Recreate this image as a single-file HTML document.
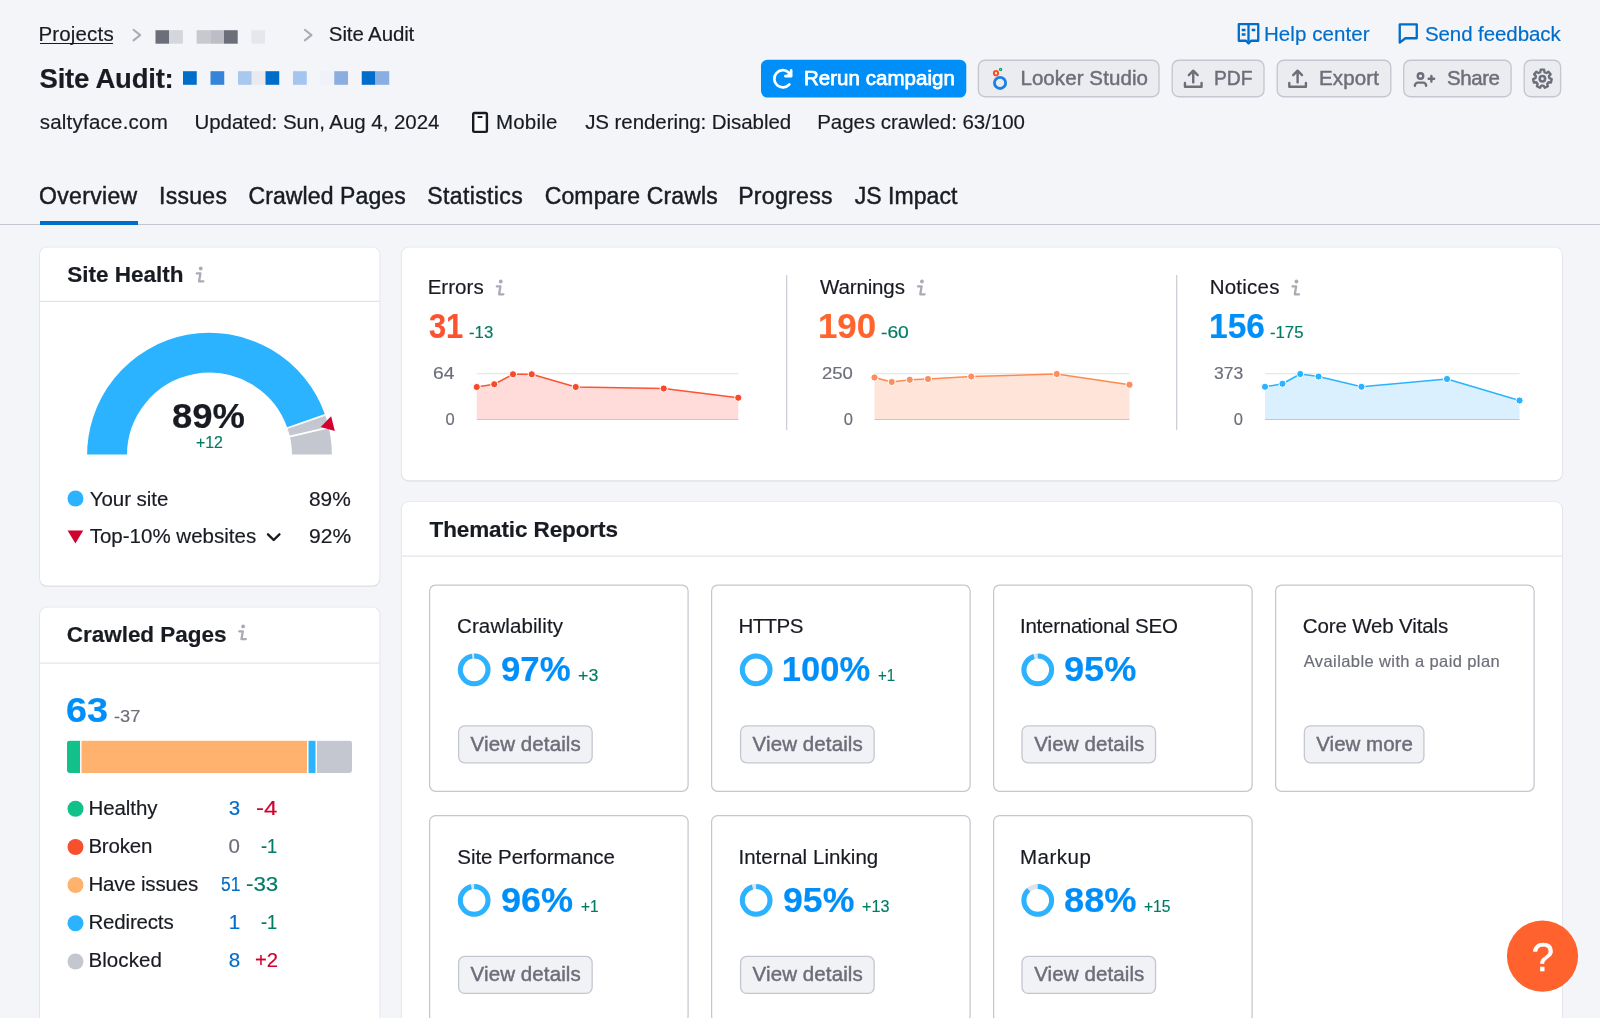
<!DOCTYPE html>
<html lang="en"><head><meta charset="utf-8"><title>Site Audit</title>
<style>
html,body{margin:0;padding:0}
body{width:1600px;height:1018px;overflow:hidden;position:relative;background:#f4f5f9;font-family:"Liberation Sans",sans-serif;color:#191b23}
.t{position:absolute;white-space:nowrap;line-height:1;transform-origin:0 50%;-webkit-text-stroke:0.18px currentColor}
.a{position:absolute}
.card{position:absolute;background:#fff;border-radius:7px;box-shadow:0 0 0 1px rgba(25,27,35,.045),0 1px 2px rgba(25,27,35,.11)}
.btn{position:absolute;box-sizing:border-box;border:1px solid #c4c7cf;border-radius:7px;background:#ebecf0}
.sub{position:absolute;box-sizing:border-box;border:1px solid #c4c7cf;border-radius:7px;background:#fff}
svg{position:absolute;left:0;top:0}
.tx{position:absolute;left:0;top:0;width:1600px;height:1018px;will-change:transform}
</style></head>
<body>
<div class="a" style="left:0px;top:224px;width:1600px;height:1px;background:#c4c7cf"></div>
<div class="a" style="left:40px;top:221px;width:98px;height:4px;background:#006dca"></div>
<div class="a" style="left:40px;top:43px;width:73px;height:1px;background:#191b23"></div>
<svg width="1600" height="1018" viewBox="0 0 1600 1018">
<rect x="39.00" y="246.40" width="341.50" height="340.10" rx="8" fill="rgba(25,27,35,.045)"/>
<rect x="39.50" y="247.40" width="340.50" height="339.70" rx="7.5" fill="rgba(25,27,35,.06)"/>
<rect x="40.00" y="247.40" width="339.50" height="338.10" rx="7" fill="#fff"/>
<rect x="39.00" y="606.60" width="341.50" height="454.40" rx="8" fill="rgba(25,27,35,.045)"/>
<rect x="39.50" y="607.60" width="340.50" height="454.00" rx="7.5" fill="rgba(25,27,35,.06)"/>
<rect x="40.00" y="607.60" width="339.50" height="452.40" rx="7" fill="#fff"/>
<rect x="400.75" y="246.40" width="1162.25" height="234.80" rx="8" fill="rgba(25,27,35,.045)"/>
<rect x="401.25" y="247.40" width="1161.25" height="234.40" rx="7.5" fill="rgba(25,27,35,.06)"/>
<rect x="401.75" y="247.40" width="1160.25" height="232.80" rx="7" fill="#fff"/>
<rect x="400.75" y="501.00" width="1162.25" height="560.00" rx="8" fill="rgba(25,27,35,.045)"/>
<rect x="401.25" y="502.00" width="1161.25" height="559.60" rx="7.5" fill="rgba(25,27,35,.06)"/>
<rect x="401.75" y="502.00" width="1160.25" height="558.00" rx="7" fill="#fff"/>
<rect x="40" y="300.75" width="339.5" height="1.1" fill="#e0e1e9"/>
<rect x="40" y="662.5500000000001" width="339.5" height="1.1" fill="#e0e1e9"/>
<rect x="401.75" y="555.5500000000001" width="1160.25" height="1.1" fill="#e0e1e9"/>
<rect x="786.1500000000001" y="275" width="1.1" height="155" fill="#c4c7cf"/>
<rect x="1176.15" y="275" width="1.1" height="155" fill="#c4c7cf"/>
<rect x="761.00" y="59.70" width="205.30" height="37.90" rx="6.5" fill="#008ff8"/>
<rect x="978.40" y="60.25" width="180.60" height="36.50" rx="6.5" fill="#ebecf0" stroke="#c4c7cf" stroke-width="1.35"/>
<rect x="1172.20" y="60.25" width="91.80" height="36.50" rx="6.5" fill="#ebecf0" stroke="#c4c7cf" stroke-width="1.35"/>
<rect x="1277.20" y="60.25" width="113.60" height="36.50" rx="6.5" fill="#ebecf0" stroke="#c4c7cf" stroke-width="1.35"/>
<rect x="1403.70" y="60.25" width="107.40" height="36.50" rx="6.5" fill="#ebecf0" stroke="#c4c7cf" stroke-width="1.35"/>
<rect x="1524.20" y="60.25" width="36.40" height="36.50" rx="6.5" fill="#ebecf0" stroke="#c4c7cf" stroke-width="1.35"/>
<rect x="429.60" y="585.00" width="258.50" height="206.30" rx="6" fill="#fff" stroke="#c4c7cf" stroke-width="1.25"/>
<rect x="711.60" y="585.00" width="258.50" height="206.30" rx="6" fill="#fff" stroke="#c4c7cf" stroke-width="1.25"/>
<rect x="993.60" y="585.00" width="258.50" height="206.30" rx="6" fill="#fff" stroke="#c4c7cf" stroke-width="1.25"/>
<rect x="1275.60" y="585.00" width="258.50" height="206.30" rx="6" fill="#fff" stroke="#c4c7cf" stroke-width="1.25"/>
<rect x="429.60" y="815.60" width="258.50" height="206.30" rx="6" fill="#fff" stroke="#c4c7cf" stroke-width="1.25"/>
<rect x="711.60" y="815.60" width="258.50" height="206.30" rx="6" fill="#fff" stroke="#c4c7cf" stroke-width="1.25"/>
<rect x="993.60" y="815.60" width="258.50" height="206.30" rx="6" fill="#fff" stroke="#c4c7cf" stroke-width="1.25"/>
<rect x="458.60" y="725.90" width="133.55" height="36.90" rx="6" fill="#f1f2f5" stroke="#c4c7cf" stroke-width="1.3"/>
<rect x="740.60" y="725.90" width="133.55" height="36.90" rx="6" fill="#f1f2f5" stroke="#c4c7cf" stroke-width="1.3"/>
<rect x="1022.00" y="725.90" width="133.55" height="36.90" rx="6" fill="#f1f2f5" stroke="#c4c7cf" stroke-width="1.3"/>
<rect x="1304.35" y="725.90" width="119.55" height="36.90" rx="6" fill="#f1f2f5" stroke="#c4c7cf" stroke-width="1.3"/>
<rect x="458.60" y="956.45" width="133.55" height="36.90" rx="6" fill="#f1f2f5" stroke="#c4c7cf" stroke-width="1.3"/>
<rect x="740.60" y="956.45" width="133.55" height="36.90" rx="6" fill="#f1f2f5" stroke="#c4c7cf" stroke-width="1.3"/>
<rect x="1022.00" y="956.45" width="133.55" height="36.90" rx="6" fill="#f1f2f5" stroke="#c4c7cf" stroke-width="1.3"/>
<clipPath id="gclip"><rect x="60" y="320" width="300" height="134.6"/></clipPath><g clip-path="url(#gclip)">
<path d="M107.10,458.42 A102.45,102.45 0 0 1 306.22,421.41" fill="none" stroke="#2bb3ff" stroke-width="39.9"/>
<path d="M306.22,421.41 A102.45,102.45 0 0 1 311.90,458.42" fill="none" stroke="#c4c7cf" stroke-width="39.9"/>
<line x1="285.97" y1="428.48" x2="326.56" y2="414.30" stroke="#fff" stroke-width="1.8"/>
<line x1="288.38" y1="436.79" x2="330.25" y2="427.01" stroke="#fff" stroke-width="1.8"/>
</g>
<polygon points="320.7,426.9 331.1,416.3 334.8,430.9" fill="#d1002f"/>
<rect x="476.75" y="373.25" width="261.5" height="1" fill="#e0e1e9"/>
<polygon points="476.75,419.5 476.75,387 494.25,384.25 513,374.25 531.75,374.25 575.75,387 663.75,388.5 738.25,397.75 738.25,419.5" fill="#ffdcd9"/>
<rect x="476.75" y="419.0" width="261.5" height="1" fill="#c4c7cf"/>
<polyline points="476.75,387 494.25,384.25 513,374.25 531.75,374.25 575.75,387 663.75,388.5 738.25,397.75" fill="none" stroke="#fb5436" stroke-width="1.5" stroke-linejoin="round"/>
<circle cx="476.75" cy="387" r="3.6" fill="#f74a2c" stroke="#fff" stroke-width="1"/>
<circle cx="494.25" cy="384.25" r="3.6" fill="#f74a2c" stroke="#fff" stroke-width="1"/>
<circle cx="513" cy="374.25" r="3.6" fill="#f74a2c" stroke="#fff" stroke-width="1"/>
<circle cx="531.75" cy="374.25" r="3.6" fill="#f74a2c" stroke="#fff" stroke-width="1"/>
<circle cx="575.75" cy="387" r="3.6" fill="#f74a2c" stroke="#fff" stroke-width="1"/>
<circle cx="663.75" cy="388.5" r="3.6" fill="#f74a2c" stroke="#fff" stroke-width="1"/>
<circle cx="738.25" cy="397.75" r="3.6" fill="#f74a2c" stroke="#fff" stroke-width="1"/>
<rect x="874.5" y="373.25" width="255.0" height="1" fill="#e0e1e9"/>
<polygon points="874.5,419.5 874.5,377.5 891.75,382 909.75,379.75 928,379 971.25,376.5 1056.75,374 1129.5,384.75 1129.5,419.5" fill="#ffe5d9"/>
<rect x="874.5" y="419.0" width="255.0" height="1" fill="#c4c7cf"/>
<polyline points="874.5,377.5 891.75,382 909.75,379.75 928,379 971.25,376.5 1056.75,374 1129.5,384.75" fill="none" stroke="#ff8a4f" stroke-width="1.5" stroke-linejoin="round"/>
<circle cx="874.5" cy="377.5" r="3.6" fill="#fb8d5e" stroke="#fff" stroke-width="1"/>
<circle cx="891.75" cy="382" r="3.6" fill="#fb8d5e" stroke="#fff" stroke-width="1"/>
<circle cx="909.75" cy="379.75" r="3.6" fill="#fb8d5e" stroke="#fff" stroke-width="1"/>
<circle cx="928" cy="379" r="3.6" fill="#fb8d5e" stroke="#fff" stroke-width="1"/>
<circle cx="971.25" cy="376.5" r="3.6" fill="#fb8d5e" stroke="#fff" stroke-width="1"/>
<circle cx="1056.75" cy="374" r="3.6" fill="#fb8d5e" stroke="#fff" stroke-width="1"/>
<circle cx="1129.5" cy="384.75" r="3.6" fill="#fb8d5e" stroke="#fff" stroke-width="1"/>
<rect x="1265" y="373.25" width="254.5" height="1" fill="#e0e1e9"/>
<polygon points="1265,419.5 1265,386.75 1282.5,383.75 1300.25,374 1318.5,376.5 1361.5,386.75 1447,379 1519.5,400.5 1519.5,419.5" fill="#dbf0fe"/>
<rect x="1265" y="419.0" width="254.5" height="1" fill="#c4c7cf"/>
<polyline points="1265,386.75 1282.5,383.75 1300.25,374 1318.5,376.5 1361.5,386.75 1447,379 1519.5,400.5" fill="none" stroke="#2bb3ff" stroke-width="1.5" stroke-linejoin="round"/>
<circle cx="1265" cy="386.75" r="3.6" fill="#2bb3ff" stroke="#fff" stroke-width="1"/>
<circle cx="1282.5" cy="383.75" r="3.6" fill="#2bb3ff" stroke="#fff" stroke-width="1"/>
<circle cx="1300.25" cy="374" r="3.6" fill="#2bb3ff" stroke="#fff" stroke-width="1"/>
<circle cx="1318.5" cy="376.5" r="3.6" fill="#2bb3ff" stroke="#fff" stroke-width="1"/>
<circle cx="1361.5" cy="386.75" r="3.6" fill="#2bb3ff" stroke="#fff" stroke-width="1"/>
<circle cx="1447" cy="379" r="3.6" fill="#2bb3ff" stroke="#fff" stroke-width="1"/>
<circle cx="1519.5" cy="400.5" r="3.6" fill="#2bb3ff" stroke="#fff" stroke-width="1"/>
<circle cx="474.15" cy="669.85" r="13.85" fill="none" stroke="#e0e1e9" stroke-width="5"/>
<circle cx="474.15" cy="669.85" r="13.85" fill="none" stroke="#2bb3ff" stroke-width="5" stroke-dasharray="84.41 87.02" transform="rotate(-90 474.15 669.85)"/>
<circle cx="756.15" cy="669.85" r="13.85" fill="none" stroke="#e0e1e9" stroke-width="5"/>
<circle cx="756.15" cy="669.85" r="13.85" fill="none" stroke="#2bb3ff" stroke-width="5"/>
<circle cx="1037.75" cy="669.85" r="13.85" fill="none" stroke="#e0e1e9" stroke-width="5"/>
<circle cx="1037.75" cy="669.85" r="13.85" fill="none" stroke="#2bb3ff" stroke-width="5" stroke-dasharray="82.67 87.02" transform="rotate(-90 1037.75 669.85)"/>
<circle cx="474.15" cy="900.35" r="13.85" fill="none" stroke="#e0e1e9" stroke-width="5"/>
<circle cx="474.15" cy="900.35" r="13.85" fill="none" stroke="#2bb3ff" stroke-width="5" stroke-dasharray="83.54 87.02" transform="rotate(-90 474.15 900.35)"/>
<circle cx="756.15" cy="900.35" r="13.85" fill="none" stroke="#e0e1e9" stroke-width="5"/>
<circle cx="756.15" cy="900.35" r="13.85" fill="none" stroke="#2bb3ff" stroke-width="5" stroke-dasharray="82.67 87.02" transform="rotate(-90 756.15 900.35)"/>
<circle cx="1037.75" cy="900.35" r="13.85" fill="none" stroke="#e0e1e9" stroke-width="5"/>
<circle cx="1037.75" cy="900.35" r="13.85" fill="none" stroke="#2bb3ff" stroke-width="5" stroke-dasharray="76.58 87.02" transform="rotate(-90 1037.75 900.35)"/>
<clipPath id="barclip"><rect x="67" y="740.6" width="285" height="32.4" rx="3"/></clipPath><g clip-path="url(#barclip)">
<rect x="67" y="740.6" width="13" height="32.4" fill="#12c18a"/>
<rect x="81.5" y="740.6" width="225.5" height="32.4" fill="#ffb26e"/>
<rect x="308.5" y="740.6" width="7.0" height="32.4" fill="#2bb3ff"/>
<rect x="317" y="740.6" width="35" height="32.4" fill="#c4c7cf"/>
</g>
<circle cx="75.5" cy="808.75" r="8" fill="#12c18a"/>
<circle cx="75.5" cy="847" r="8" fill="#f7502e"/>
<circle cx="75.5" cy="885" r="8" fill="#ffb26e"/>
<circle cx="75.5" cy="923.25" r="8" fill="#2bb3ff"/>
<circle cx="75.5" cy="961.5" r="8" fill="#c4c7cf"/>
<polyline points="133.5,29.8 140.2,35.1 133.5,40.4" fill="none" stroke="#a9abb6" stroke-width="2" stroke-linecap="round" stroke-linejoin="round"/>
<polyline points="304.8,29.8 311.5,35.1 304.8,40.4" fill="none" stroke="#a9abb6" stroke-width="2" stroke-linecap="round" stroke-linejoin="round"/>
<rect x="155.50" y="30.2" width="13.7" height="13.5" fill="#6c6e79"/>
<rect x="169.20" y="30.2" width="13.7" height="13.5" fill="#d5d6dc"/>
<rect x="196.60" y="30.2" width="13.7" height="13.5" fill="#c8c9cf"/>
<rect x="210.30" y="30.2" width="13.7" height="13.5" fill="#bcbdc5"/>
<rect x="224.00" y="30.2" width="13.7" height="13.5" fill="#6c6e79"/>
<rect x="251.40" y="30.2" width="13.7" height="13.5" fill="#e6e7ec"/>
<rect x="183.00" y="71.2" width="13.75" height="13.6" fill="#006dca"/>
<rect x="210.50" y="71.2" width="13.75" height="13.6" fill="#3584d9"/>
<rect x="238.00" y="71.2" width="13.75" height="13.6" fill="#a9c8ee"/>
<rect x="251.75" y="71.2" width="13.75" height="13.6" fill="#e8eaf0"/>
<rect x="265.50" y="71.2" width="13.75" height="13.6" fill="#006dca"/>
<rect x="293.00" y="71.2" width="13.75" height="13.6" fill="#a3c5f0"/>
<rect x="320.50" y="71.2" width="13.75" height="13.6" fill="#eff2f8"/>
<rect x="334.25" y="71.2" width="13.75" height="13.6" fill="#8aaee0"/>
<rect x="361.75" y="71.2" width="13.75" height="13.6" fill="#006dca"/>
<rect x="375.50" y="71.2" width="13.75" height="13.6" fill="#8aaee0"/>
<rect x="473.2" y="113.05" width="13.7" height="18.8" rx="1.3" fill="#fff" stroke="#191b23" stroke-width="2.4"/>
<rect x="477.4" y="116" width="5.2" height="2" rx="1" fill="#191b23"/>
<g stroke="#006dca" stroke-width="2.3" fill="none" stroke-linejoin="round"><path d="M1238.8,24.15 h19.45 v16.6 h-7.2 l-2.5,2.6 l-2.5,-2.6 h-7.25 z"/><path d="M1248.5,24.15 v17.5"/><path d="M1241.7,30 h3.8 M1241.7,34.5 h3.8 M1251.7,30 h3.6" stroke-width="2.5"/></g>
<path d="M1399.75,24.45 h17 v13.8 h-11.4 l-5.6,4.3 z" fill="none" stroke="#006dca" stroke-width="2.3" stroke-linejoin="round"/>
<g stroke="#fff" stroke-width="2.7" fill="none" stroke-linecap="round" stroke-linejoin="round"><path d="M789.39,84.44 A8.6,8.6 0 1 1 788.65,72.41"/><path d="M791.15,70.4 V76.15 H785.4"/></g><polygon points="791.15,70.4 791.15,76.15 785.4,76.15" fill="#fff"/>
<circle cx="1000.05" cy="82.9" r="5.6" fill="none" stroke="#1a80e5" stroke-width="2.8"/><circle cx="996" cy="73.2" r="2.15" fill="none" stroke="#ff4a22" stroke-width="1.9"/><circle cx="1000.6" cy="69.5" r="1.1" fill="none" stroke="#0da960" stroke-width="1.3"/>
<g stroke="#6c6e79" stroke-width="2.4" fill="none" stroke-linecap="round" stroke-linejoin="round"><path d="M1193.25,82.4 V71 M1188.85,75.1 L1193.25,70.7 L1197.65,75.1"/><path d="M1184.95,82.9 V86.7 H1201.55 V82.9"/></g>
<g stroke="#6c6e79" stroke-width="2.4" fill="none" stroke-linecap="round" stroke-linejoin="round"><path d="M1297.6,82.4 V71 M1293.1999999999998,75.1 L1297.6,70.7 L1302.0,75.1"/><path d="M1289.3,82.9 V86.7 H1305.8999999999999 V82.9"/></g>
<g stroke="#6c6e79" stroke-width="2.4" fill="none" stroke-linecap="round" stroke-linejoin="round"><circle cx="1420.5" cy="75.95" r="2.75"/><path d="M1414.9,85.8 v-0.2 a3,3 0 0 1 3,-3 h5.2 a3,3 0 0 1 3,3 v0.2"/><path d="M1431.4,75.95 v5.5 M1428.65,78.7 h5.5"/></g>
<g stroke="#6c6e79" stroke-width="2.4" fill="none" stroke-linejoin="round"><path d="M1540.35,72.06 L1540.71,69.61 L1544.09,69.61 L1544.45,72.06 L1546.36,72.98 L1548.49,71.72 L1550.61,74.37 L1548.91,76.18 L1549.38,78.24 L1551.69,79.13 L1550.94,82.44 L1548.47,82.23 L1547.15,83.89 L1547.89,86.25 L1544.84,87.72 L1543.46,85.67 L1541.34,85.67 L1539.96,87.72 L1536.91,86.25 L1537.65,83.89 L1536.33,82.23 L1533.86,82.44 L1533.11,79.13 L1535.42,78.24 L1535.89,76.18 L1534.19,74.37 L1536.31,71.72 L1538.44,72.98 Z"/><circle cx="1542.4" cy="78.75" r="2.7" stroke-width="2.6"/></g>
<circle cx="1542.5" cy="956.1" r="35.6" fill="#ff622d"/>
<g transform="translate(196,266.5)" stroke="#a9abb6" fill="none" stroke-width="2.3" stroke-linecap="round" stroke-linejoin="round"><circle cx="4.75" cy="2" r="1.9" fill="#a9abb6" stroke="none"/><path d="M0.8,6.9 L4.4,6.9 L3.1,14.8 L7.4,14.8"/></g>
<g transform="translate(238.4,624.4)" stroke="#a9abb6" fill="none" stroke-width="2.3" stroke-linecap="round" stroke-linejoin="round"><circle cx="4.75" cy="2" r="1.9" fill="#a9abb6" stroke="none"/><path d="M0.8,6.9 L4.4,6.9 L3.1,14.8 L7.4,14.8"/></g>
<g transform="translate(496,279.5)" stroke="#a9abb6" fill="none" stroke-width="2.3" stroke-linecap="round" stroke-linejoin="round"><circle cx="4.75" cy="2" r="1.9" fill="#a9abb6" stroke="none"/><path d="M0.8,6.9 L4.4,6.9 L3.1,14.8 L7.4,14.8"/></g>
<g transform="translate(917.2,279.5)" stroke="#a9abb6" fill="none" stroke-width="2.3" stroke-linecap="round" stroke-linejoin="round"><circle cx="4.75" cy="2" r="1.9" fill="#a9abb6" stroke="none"/><path d="M0.8,6.9 L4.4,6.9 L3.1,14.8 L7.4,14.8"/></g>
<g transform="translate(1291.7,279.5)" stroke="#a9abb6" fill="none" stroke-width="2.3" stroke-linecap="round" stroke-linejoin="round"><circle cx="4.75" cy="2" r="1.9" fill="#a9abb6" stroke="none"/><path d="M0.8,6.9 L4.4,6.9 L3.1,14.8 L7.4,14.8"/></g>
<circle cx="75.5" cy="498.5" r="8" fill="#2bb3ff"/>
<polygon points="67.6,530.6 83.2,530.6 75.4,543.4" fill="#d1002f"/>
<polyline points="268,534.3 273.7,540 279.4,534.3" fill="none" stroke="#191b23" stroke-width="2.4" stroke-linecap="round" stroke-linejoin="round"/>
</svg>
<div class="tx">
<span class="t" style="left:38.40px;top:24.25px;font-size:20.5px;color:#191b23;letter-spacing:0.170px;">Projects</span>
<span class="t" style="left:328.86px;top:24.25px;font-size:20.5px;color:#191b23;letter-spacing:-0.131px;">Site Audit</span>
<span class="t" style="left:39.57px;top:64.50px;font-size:27.5px;color:#191b23;font-weight:700;letter-spacing:-0.227px;">Site Audit:</span>
<span class="t" style="left:39.68px;top:111.75px;font-size:20.5px;color:#191b23;letter-spacing:0.234px;">saltyface.com</span>
<span class="t" style="left:194.47px;top:111.75px;font-size:20.5px;color:#191b23;letter-spacing:-0.054px;">Updated: Sun, Aug 4, 2024</span>
<span class="t" style="left:495.90px;top:111.75px;font-size:20.5px;color:#191b23;letter-spacing:0.229px;">Mobile</span>
<span class="t" style="left:585.18px;top:111.75px;font-size:20.5px;color:#191b23;letter-spacing:-0.068px;">JS rendering: Disabled</span>
<span class="t" style="left:817.15px;top:111.75px;font-size:20.5px;color:#191b23;letter-spacing:-0.035px;">Pages crawled: 63/100</span>
<span class="t" style="left:38.92px;top:184.75px;font-size:23px;color:#191b23;letter-spacing:0.349px;-webkit-text-stroke:0.45px currentColor;">Overview</span>
<span class="t" style="left:158.95px;top:184.75px;font-size:23px;color:#191b23;letter-spacing:0.308px;-webkit-text-stroke:0.45px currentColor;">Issues</span>
<span class="t" style="left:248.42px;top:184.75px;font-size:23px;color:#191b23;letter-spacing:0.111px;-webkit-text-stroke:0.45px currentColor;">Crawled Pages</span>
<span class="t" style="left:427.28px;top:184.75px;font-size:23px;color:#191b23;letter-spacing:0.379px;-webkit-text-stroke:0.45px currentColor;">Statistics</span>
<span class="t" style="left:544.67px;top:184.75px;font-size:23px;color:#191b23;letter-spacing:0.137px;-webkit-text-stroke:0.45px currentColor;">Compare Crawls</span>
<span class="t" style="left:738.20px;top:184.75px;font-size:23px;color:#191b23;letter-spacing:0.319px;-webkit-text-stroke:0.45px currentColor;">Progress</span>
<span class="t" style="left:854.64px;top:184.75px;font-size:23px;color:#191b23;letter-spacing:0.066px;-webkit-text-stroke:0.45px currentColor;">JS Impact</span>
<span class="t" style="left:1264.00px;top:24.25px;font-size:20.5px;color:#006dca;letter-spacing:0.067px;">Help center</span>
<span class="t" style="left:1424.96px;top:24.25px;font-size:20.5px;color:#006dca;letter-spacing:-0.088px;">Send feedback</span>
<span class="t" style="left:803.90px;top:68.00px;font-size:20.5px;color:#fff;letter-spacing:0.045px;-webkit-text-stroke:0.75px #fff;">Rerun campaign</span>
<span class="t" style="left:1020.40px;top:68.00px;font-size:20.5px;color:#6c6e79;letter-spacing:0.086px;-webkit-text-stroke:0.45px currentColor;">Looker Studio</span>
<span class="t" style="left:1214.09px;top:68.00px;font-size:20.5px;color:#6c6e79;transform:scaleX(0.9399);-webkit-text-stroke:0.45px currentColor;">PDF</span>
<span class="t" style="left:1318.90px;top:68.00px;font-size:20.5px;color:#6c6e79;letter-spacing:0.157px;-webkit-text-stroke:0.45px currentColor;">Export</span>
<span class="t" style="left:1446.96px;top:68.00px;font-size:20.5px;color:#6c6e79;letter-spacing:-0.408px;-webkit-text-stroke:0.45px currentColor;">Share</span>
<span class="t" style="left:67.15px;top:264.00px;font-size:22.5px;color:#191b23;font-weight:700;letter-spacing:0.016px;">Site Health</span>
<span class="t" style="left:171.86px;top:399.00px;font-size:34.5px;color:#191b23;font-weight:700;transform:scaleX(1.0558);">89%</span>
<span class="t" style="left:196.26px;top:434.25px;font-size:16.5px;color:#007c65;transform:scaleX(0.9606);">+12</span>
<span class="t" style="left:89.68px;top:488.50px;font-size:20.5px;color:#191b23;letter-spacing:-0.046px;">Your site</span>
<span class="t" style="left:309.35px;top:488.50px;font-size:20.5px;color:#191b23;transform:scaleX(1.0181);">89%</span>
<span class="t" style="left:89.68px;top:526.00px;font-size:20.5px;color:#191b23;letter-spacing:0.007px;">Top-10% websites</span>
<span class="t" style="left:309.01px;top:526.00px;font-size:20.5px;color:#191b23;transform:scaleX(1.0264);">92%</span>
<span class="t" style="left:66.80px;top:624.00px;font-size:22.5px;color:#191b23;font-weight:700;letter-spacing:-0.038px;">Crawled Pages</span>
<span class="t" style="left:66.32px;top:693.00px;font-size:34.5px;color:#008ff8;font-weight:700;transform:scaleX(1.0978);">63</span>
<span class="t" style="left:114.43px;top:708.00px;font-size:16.5px;color:#6c6e79;transform:scaleX(1.1031);">-37</span>
<span class="t" style="left:88.40px;top:798.00px;font-size:20.5px;color:#191b23;letter-spacing:-0.068px;">Healthy</span>
<span class="t" style="left:228.83px;top:798.00px;font-size:20.5px;color:#006dca;">3</span>
<span class="t" style="left:256.25px;top:798.00px;font-size:20.5px;color:#d1002f;transform:scaleX(1.1653);">-4</span>
<span class="t" style="left:88.40px;top:836.00px;font-size:20.5px;color:#191b23;letter-spacing:-0.190px;">Broken</span>
<span class="t" style="left:228.51px;top:836.00px;font-size:20.5px;color:#6c6e79;">0</span>
<span class="t" style="left:261.43px;top:836.00px;font-size:20.5px;color:#007c65;transform:scaleX(0.8892);">-1</span>
<span class="t" style="left:88.40px;top:873.75px;font-size:20.5px;color:#191b23;letter-spacing:-0.192px;">Have issues</span>
<span class="t" style="left:220.70px;top:873.75px;font-size:20.5px;color:#006dca;transform:scaleX(0.8509);">51</span>
<span class="t" style="left:245.55px;top:873.75px;font-size:20.5px;color:#007c65;transform:scaleX(1.0885);">-33</span>
<span class="t" style="left:88.40px;top:911.75px;font-size:20.5px;color:#191b23;letter-spacing:-0.168px;">Redirects</span>
<span class="t" style="left:228.83px;top:911.75px;font-size:20.5px;color:#006dca;">1</span>
<span class="t" style="left:261.43px;top:911.75px;font-size:20.5px;color:#007c65;transform:scaleX(0.8892);">-1</span>
<span class="t" style="left:88.40px;top:950.25px;font-size:20.5px;color:#191b23;letter-spacing:0.095px;">Blocked</span>
<span class="t" style="left:228.83px;top:950.25px;font-size:20.5px;color:#006dca;">8</span>
<span class="t" style="left:254.55px;top:950.25px;font-size:20.5px;color:#d1002f;transform:scaleX(0.9916);">+2</span>
<span class="t" style="left:427.65px;top:277.00px;font-size:20.5px;color:#191b23;letter-spacing:0.038px;">Errors</span>
<span class="t" style="left:429.02px;top:308.50px;font-size:34.5px;color:#fb5230;font-weight:700;transform:scaleX(0.8925);">31</span>
<span class="t" style="left:468.98px;top:323.50px;font-size:16.5px;color:#007c65;transform:scaleX(1.0149);">-13</span>
<span class="t" style="left:433.35px;top:364.75px;font-size:16.5px;color:#6c6e79;transform:scaleX(1.1649);">64</span>
<span class="t" style="left:445.48px;top:410.50px;font-size:16.5px;color:#6c6e79;">0</span>
<span class="t" style="left:820.00px;top:277.00px;font-size:20.5px;color:#191b23;letter-spacing:-0.133px;">Warnings</span>
<span class="t" style="left:817.82px;top:308.50px;font-size:34.5px;color:#ff642d;font-weight:700;transform:scaleX(1.0091);">190</span>
<span class="t" style="left:881.40px;top:323.50px;font-size:16.5px;color:#007c65;transform:scaleX(1.1670);">-60</span>
<span class="t" style="left:822.13px;top:364.75px;font-size:16.5px;color:#6c6e79;transform:scaleX(1.1197);">250</span>
<span class="t" style="left:843.73px;top:410.50px;font-size:16.5px;color:#6c6e79;">0</span>
<span class="t" style="left:1209.65px;top:277.00px;font-size:20.5px;color:#191b23;letter-spacing:0.231px;">Notices</span>
<span class="t" style="left:1208.65px;top:308.50px;font-size:34.5px;color:#008ff8;font-weight:700;transform:scaleX(0.9717);">156</span>
<span class="t" style="left:1270.23px;top:323.50px;font-size:16.5px;color:#007c65;transform:scaleX(1.0129);">-175</span>
<span class="t" style="left:1213.95px;top:364.75px;font-size:16.5px;color:#6c6e79;transform:scaleX(1.0628);">373</span>
<span class="t" style="left:1233.73px;top:410.50px;font-size:16.5px;color:#6c6e79;">0</span>
<span class="t" style="left:429.50px;top:518.75px;font-size:22.5px;color:#191b23;font-weight:700;letter-spacing:-0.109px;">Thematic Reports</span>
<span class="t" style="left:457.04px;top:616.00px;font-size:20.5px;color:#191b23;letter-spacing:0.105px;">Crawlability</span>
<span class="t" style="left:500.91px;top:652.25px;font-size:34.5px;color:#008ff8;font-weight:700;transform:scaleX(1.0076);">97%</span>
<span class="t" style="left:578.42px;top:667.25px;font-size:16.5px;color:#007c65;transform:scaleX(1.0794);">+3</span>
<span class="t" style="left:470.60px;top:733.75px;font-size:20.5px;color:#6c6e79;letter-spacing:0.102px;-webkit-text-stroke:0.45px currentColor;">View details</span>
<span class="t" style="left:738.40px;top:616.00px;font-size:20.5px;color:#191b23;letter-spacing:-0.558px;">HTTPS</span>
<span class="t" style="left:781.85px;top:652.25px;font-size:34.5px;color:#008ff8;font-weight:700;">100%</span>
<span class="t" style="left:878.05px;top:667.25px;font-size:16.5px;color:#007c65;transform:scaleX(0.9067);">+1</span>
<span class="t" style="left:752.60px;top:733.75px;font-size:20.5px;color:#6c6e79;letter-spacing:0.102px;-webkit-text-stroke:0.45px currentColor;">View details</span>
<span class="t" style="left:1020.00px;top:616.00px;font-size:20.5px;color:#191b23;letter-spacing:-0.245px;">International SEO</span>
<span class="t" style="left:1064.47px;top:652.25px;font-size:34.5px;color:#008ff8;font-weight:700;transform:scaleX(1.0469);">95%</span>
<span class="t" style="left:1034.20px;top:733.75px;font-size:20.5px;color:#6c6e79;letter-spacing:0.102px;-webkit-text-stroke:0.45px currentColor;">View details</span>
<span class="t" style="left:457.36px;top:846.50px;font-size:20.5px;color:#191b23;letter-spacing:-0.060px;">Site Performance</span>
<span class="t" style="left:500.87px;top:882.75px;font-size:34.5px;color:#008ff8;font-weight:700;transform:scaleX(1.0447);">96%</span>
<span class="t" style="left:581.03px;top:897.75px;font-size:16.5px;color:#007c65;transform:scaleX(0.9355);">+1</span>
<span class="t" style="left:470.60px;top:964.25px;font-size:20.5px;color:#6c6e79;letter-spacing:0.102px;-webkit-text-stroke:0.45px currentColor;">View details</span>
<span class="t" style="left:738.40px;top:846.50px;font-size:20.5px;color:#191b23;letter-spacing:0.054px;">Internal Linking</span>
<span class="t" style="left:782.89px;top:882.75px;font-size:34.5px;color:#008ff8;font-weight:700;transform:scaleX(1.0328);">95%</span>
<span class="t" style="left:861.74px;top:897.75px;font-size:16.5px;color:#007c65;transform:scaleX(0.9794);">+13</span>
<span class="t" style="left:752.60px;top:964.25px;font-size:20.5px;color:#6c6e79;letter-spacing:0.102px;-webkit-text-stroke:0.45px currentColor;">View details</span>
<span class="t" style="left:1020.00px;top:846.50px;font-size:20.5px;color:#191b23;letter-spacing:0.495px;">Markup</span>
<span class="t" style="left:1064.47px;top:882.75px;font-size:34.5px;color:#008ff8;font-weight:700;transform:scaleX(1.0506);">88%</span>
<span class="t" style="left:1144.47px;top:897.75px;font-size:16.5px;color:#007c65;transform:scaleX(0.9455);">+15</span>
<span class="t" style="left:1034.20px;top:964.25px;font-size:20.5px;color:#6c6e79;letter-spacing:0.102px;-webkit-text-stroke:0.45px currentColor;">View details</span>
<span class="t" style="left:1302.79px;top:616.00px;font-size:20.5px;color:#191b23;letter-spacing:-0.144px;">Core Web Vitals</span>
<span class="t" style="left:1303.75px;top:653.00px;font-size:16.5px;color:#6c6e79;letter-spacing:0.401px;">Available with a paid plan</span>
<span class="t" style="left:1316.25px;top:733.75px;font-size:20.5px;color:#6c6e79;letter-spacing:0.015px;-webkit-text-stroke:0.45px currentColor;">View more</span>
<span class="t" style="left:1531.75px;top:937.25px;font-size:40px;color:#fff;-webkit-text-stroke:0.5px #fff;">?</span>
</div>
</body></html>
